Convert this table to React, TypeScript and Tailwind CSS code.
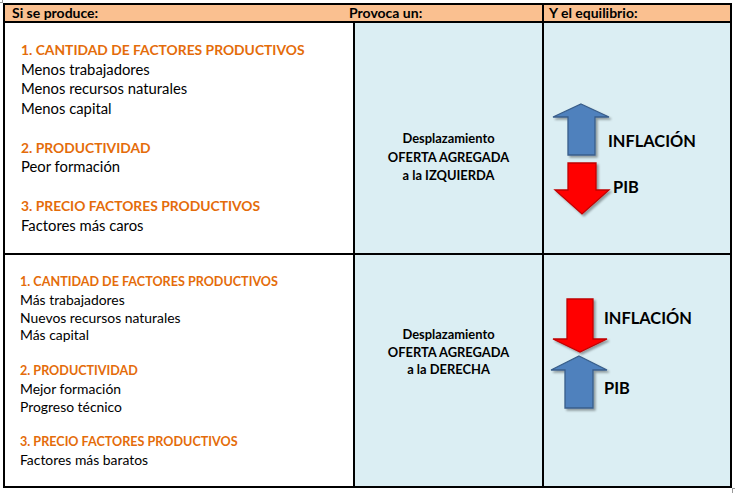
import React from "react";

const H1 = "font-bold text-[#E46C0A] text-[13.85px]";
const H2 = "font-bold text-[#E46C0A] text-[12.6px]";

function UpArrow({ d }: { d: string }) {
  return <path d={d} fill="#4F81BD" stroke="#385D8A" strokeWidth="1.3" filter="url(#sh)" />;
}
function DownArrow({ d }: { d: string }) {
  return <path d={d} fill="#FF0000" stroke="#C00000" strokeWidth="1.3" filter="url(#sh)" />;
}

function Defs() {
  return (
    <defs>
      <filter id="sh" x="-20%" y="-20%" width="150%" height="150%">
        <feDropShadow dx="2" dy="2" stdDeviation="1.2" floodColor="#000" floodOpacity="0.35" />
      </filter>
    </defs>
  );
}

export default function App() {
  return (
    <div className="w-[735px] h-[493px] bg-white font-[Lato,sans-serif] text-black relative">
      <div className="absolute left-0 top-0 w-[3px] h-[3px] border-r border-b border-[#9a9a9a]" />
      <div className="absolute left-[732px] top-[488px] w-[3px] h-[5px] border-l border-t border-[#9a9a9a]" />
      <div className="ml-[3px] pt-[3px]">
        <div className="w-[729px] h-[485px] border-2 border-black flex flex-col">
          {/* header */}
          <div className="h-[18px] flex bg-[#FAC090] border-b-2 border-black text-[14px] font-bold leading-[16px]">
            <div className="w-[344px] pl-[7px]">Si se produce:</div>
            <div className="w-[195px] border-r-2 border-black">Provoca un:</div>
            <div className="flex-1 pl-[5px]">Y el equilibrio:</div>
          </div>
          {/* row 1 */}
          <div className="h-[232px] flex border-b-2 border-black">
            <div className="w-[350px] border-r-2 border-black pl-[16px] pt-[17px] text-[14.8px] leading-[19.5px]">
              <div className={H1}>1. CANTIDAD DE FACTORES PRODUCTIVOS</div>
              <div>Menos trabajadores</div>
              <div>Menos recursos naturales</div>
              <div>Menos capital</div>
              <div className="h-[19.5px]" />
              <div className={H1}>2. PRODUCTIVIDAD</div>
              <div>Peor formación</div>
              <div className="h-[19.5px]" />
              <div className={H1}>3. PRECIO FACTORES PRODUCTIVOS</div>
              <div>Factores más caros</div>
            </div>
            <div className="w-[189px] border-r-2 border-black bg-[#DBEEF3] pt-[106px] text-center text-[12.9px] font-bold leading-[18.5px]">
              <div>Desplazamiento</div>
              <div>OFERTA AGREGADA</div>
              <div>a la IZQUIERDA</div>
            </div>
            <div className="flex-1 bg-[#DBEEF3] flex items-start">
              <svg width="56" height="120" viewBox="0 0 56 120" className="ml-[6px] mt-[77px] overflow-visible">
                <Defs />
                <UpArrow d="M31 4 L59 17 L45 17 L45 55 L18 55 L18 17 L3 17 Z" />
                <DownArrow d="M18 63 L46 63 L46 90 L59 90 L32 114 L5 90 L18 90 Z" />
              </svg>
              <div className="mt-[108px] flex flex-col text-[16.4px] font-bold leading-[20px]">
                <div className="ml-[2px]">INFLACIÓN</div>
                <div className="ml-[7px] mt-[26px]">PIB</div>
              </div>
            </div>
          </div>
          {/* row 2 */}
          <div className="flex-1 flex">
            <div className="w-[350px] border-r-2 border-black pl-[15px] pt-[18px] text-[13.9px] leading-[17.8px]">
              <div className={H2}>1. CANTIDAD DE FACTORES PRODUCTIVOS</div>
              <div>Más trabajadores</div>
              <div>Nuevos recursos naturales</div>
              <div>Más capital</div>
              <div className="h-[17.8px]" />
              <div className={H2}>2. PRODUCTIVIDAD</div>
              <div>Mejor formación</div>
              <div>Progreso técnico</div>
              <div className="h-[17.8px]" />
              <div className={H2}>3. PRECIO FACTORES PRODUCTIVOS</div>
              <div>Factores más baratos</div>
            </div>
            <div className="w-[189px] border-r-2 border-black bg-[#DBEEF3] pt-[71px] text-center text-[12.9px] font-bold leading-[17.5px]">
              <div>Desplazamiento</div>
              <div>OFERTA AGREGADA</div>
              <div>a la DERECHA</div>
            </div>
            <div className="flex-1 bg-[#DBEEF3] flex items-start">
              <svg width="56" height="120" viewBox="0 0 56 120" className="ml-[4px] mt-[40px] overflow-visible">
                <Defs />
                <DownArrow d="M19 4 L45 4 L45 44 L59 44 L32 57 L5 44 L19 44 Z" />
                <UpArrow d="M31 61 L59 75 L45 75 L45 113 L17 113 L17 75 L3 75 Z" />
              </svg>
              <div className="mt-[53px] flex flex-col text-[16.4px] font-bold leading-[20px]">
                <div>INFLACIÓN</div>
                <div className="mt-[50px]">PIB</div>
              </div>
            </div>
          </div>
        </div>
      </div>
    </div>
  );
}
